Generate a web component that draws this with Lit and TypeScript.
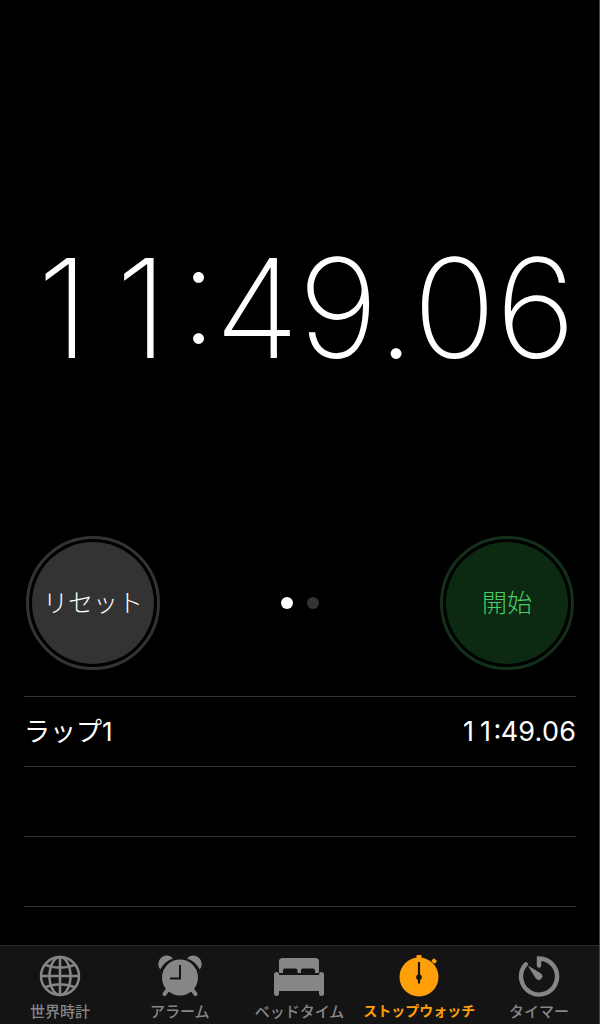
import { LitElement, html, css, svg } from "lit";
import { customElement, property, state } from "lit/decorators.js";
import { classMap } from "lit/directives/class-map.js";

const ICONS = {
  globe: svg`<g fill="none" stroke="currentColor" stroke-width="2.5">
    <circle cx="26" cy="22" r="19"/>
    <ellipse cx="26" cy="22" rx="10.500" ry="19"/>
    <path d="M26 3V41M7 22H45M11.500 11Q26 16.500 40.500 11M11.500 33Q26 27.500 40.500 33"/></g>`,
  alarm: svg`<g fill="currentColor">
    <path d="M6.300 15.500A8 8 0 0 1 19 4.500A22 22 0 0 0 6.300 15.500Z"/>
    <path d="M45.700 15.500A8 8 0 0 0 33 4.500A22 22 0 0 1 45.700 15.500Z"/>
    <circle cx="26" cy="23.500" r="18"/></g>
    <path d="M13.500 36L10.500 40M38.500 36L41.500 40" stroke="currentColor" stroke-width="4" stroke-linecap="round"/>
    <path d="M26 11V24.500H16" fill="none" stroke="#141414" stroke-width="2"/>`,
  bed: svg`<path fill="currentColor" d="M6 19V7.500Q6 4 9.500 4H42.500Q46 4 46 7.500V19H42V16.500Q42 14.500 40 14.500H30Q28 14.500 28 16.500V19H24.500V16.500Q24.500 14.500 22.500 14.500H12Q10 14.500 10 16.500V19Z"/>
    <path fill="currentColor" d="M1 20.500A2.500 2.500 0 0 1 6 20.500V21H46V20.500A2.500 2.500 0 0 1 51 20.500V39.500A2.500 2.500 0 0 1 46 39.500V37H6V39.500A2.500 2.500 0 0 1 1 39.500Z"/>`,
  stopwatch: svg`<g fill="currentColor"><circle cx="26" cy="23" r="19.500"/>
    <rect x="23.500" y="1" width="5" height="5" rx="1"/>
    <rect x="39" y="5" width="4.500" height="4" rx="1" transform="rotate(42 41.200 7)"/></g>
    <path d="M26 8V29.500" stroke="#141414" stroke-width="2.200"/><circle cx="26" cy="23.300" r="2.800" fill="#141414"/>`,
  timer: svg`<path d="M26 11.500V4.500A18 18 0 1 1 12.800 10.300" fill="none" stroke="currentColor" stroke-width="4.400" stroke-linecap="round"/>
    <path d="M15.800 12.500L28 20A3.200 3.200 0 0 1 23.400 24.600Z" fill="currentColor" stroke="currentColor" stroke-width="1" stroke-linejoin="round"/>`,
};

type IconName = keyof typeof ICONS;

@customElement("tab-icon")
class TabIcon extends LitElement {
  @property() name: IconName = "globe";

  static styles = css`
    :host { display: block; }
    .icon { display: block; width: 52px; height: 44px; }
  `;

  render() {
    return html`<svg class="icon" viewBox="0 0 52 44" aria-hidden="true">${ICONS[this.name]}</svg>`;
  }
}

@customElement("app-root")
class AppRoot extends LitElement {
  @state() private tab = "stopwatch";
  @state() private face = 0;
  @state() private time = "11:49.06";

  private tabs: { id: string; icon: IconName; label: string }[] = [
    { id: "world", icon: "globe", label: "世界時計" },
    { id: "alarm", icon: "alarm", label: "アラーム" },
    { id: "bedtime", icon: "bed", label: "ベッドタイム" },
    { id: "stopwatch", icon: "stopwatch", label: "ストップウォッチ" },
    { id: "timer", icon: "timer", label: "タイマー" },
  ];

  private rows = [["ラップ1", "11:49.06"], ["", ""], ["", ""]];

  static styles = css`
    :host {
      display: flex;
      flex-direction: column;
      min-height: 100vh;
      box-sizing: border-box;
      background: #000;
      border-right: 1px solid #444;
      color: #fff;
      font-family: Inter, "Noto Sans CJK JP", sans-serif;
    }
    .main { flex: 1; display: flex; flex-direction: column; padding: 0 23px 0 24px; }
    .clock {
      flex: 1;
      display: flex;
      align-items: center;
      justify-content: center;
      padding-top: 80px;
      font-size: 138px;
      line-height: 168px;
      font-weight: 200;
      white-space: nowrap;
    }
    .digit, .mark { width: 82px; display: flex; justify-content: center; font-feature-settings: "case"; }
    .mark { width: 35px; }
    .controls {
      display: flex;
      align-items: center;
      justify-content: space-between;
      padding: 0 2px 26px;
    }
    .round {
      width: 134px;
      height: 134px;
      padding: 3px;
      border: 3px solid #333;
      border-radius: 50%;
      background: none;
      font: 300 25px/36px "Noto Sans CJK JP", sans-serif;
      color: #fff;
      white-space: nowrap;
      display: grid;
    }
    .face { border-radius: 50%; background: #333; display: grid; place-items: center; padding-bottom: 4px; }
    .start { border-color: #12301a; color: #4ccb66; }
    .start .face { background: #0c2912; }
    .dots { display: flex; gap: 14px; }
    .dot { width: 12px; height: 12px; padding: 0; border: 0; border-radius: 50%; background: #333; }
    .dot.on { background: #fff; }
    .laps { width: 100%; border-collapse: collapse; margin-bottom: 38px; }
    .laps tr { height: 70px; border-top: 1px solid #333; border-bottom: 1px solid #333; }
    .laps th, .laps td { padding: 0; line-height: 36px; font-weight: 400; }
    .laps th { text-align: left; font-size: 26px; }
    .laps td { font-size: 27px; }
    .lap-time { display: flex; justify-content: flex-end; }
    .laps .digit { width: 17px; }
    .laps .mark { width: 7px; }
    .tabs {
      display: grid;
      grid-template-columns: repeat(5, 1fr);
      background: #141414;
      border-top: 1px solid #2b2b2b;
    }
    .tab {
      display: flex;
      flex-direction: column;
      align-items: center;
      padding: 8px 0 1px;
      color: #868686;
      text-decoration: none;
      font: 500 15px/25px "Noto Sans CJK JP", sans-serif;
      white-space: nowrap;
    }
    .tab.on { color: #ff9f0a; font-size: 14px; font-weight: 700; }
  `;

  private cells(time: string) {
    return [...time].map((c) => html`<span class=${/\d/.test(c) ? "digit" : "mark"}>${c}</span>`);
  }

  render() {
    return html`
      <main class="main">
        <div class="clock" role="timer">${this.cells(this.time)}</div>
        <div class="controls">
          <button class="round"><span class="face">リセット</span></button>
          <div class="dots">
            ${[0, 1].map((i) => html`<button
              class=${classMap({ dot: true, on: this.face === i })}
              aria-label=${i + 1}
              @click=${() => (this.face = i)}></button>`)}
          </div>
          <button class="round start"><span class="face">開始</span></button>
        </div>
        <table class="laps">
          <tbody>
            ${this.rows.map(([name, time]) => html`<tr><th scope="row">${name}</th><td><div class="lap-time">${this.cells(time)}</div></td></tr>`)}
          </tbody>
        </table>
      </main>
      <nav class="tabs">
        ${this.tabs.map((t) => html`<a
          href="#${t.id}"
          class=${classMap({ tab: true, on: this.tab === t.id })}
          @click=${() => (this.tab = t.id)}
          ><tab-icon name=${t.icon}></tab-icon><span>${t.label}</span></a>`)}
      </nav>
    `;
  }
}
